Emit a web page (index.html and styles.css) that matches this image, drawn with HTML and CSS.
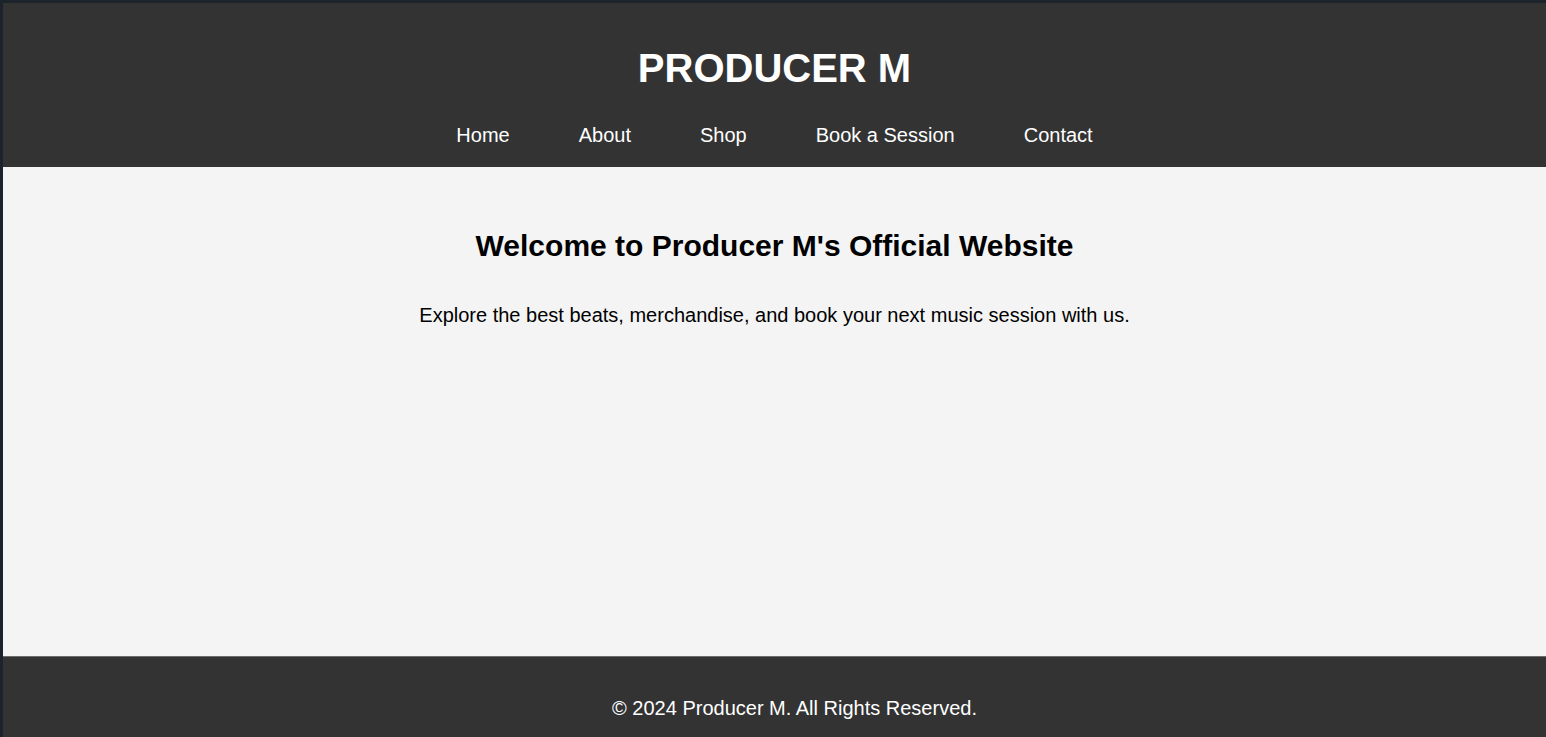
FILE: index.html
```html
<!DOCTYPE html>
<html lang="en">
<head>
<meta charset="utf-8">
<title>Producer M</title>
<link rel="stylesheet" href="styles.css">
</head>
<body>
<div class="frame">
  <header class="site-header">
    <h1 class="brand">PRODUCER M</h1>
    <nav class="nav">
      <a href="#" class="nav-link">Home</a>
      <a href="#" class="nav-link">About</a>
      <a href="#" class="nav-link">Shop</a>
      <a href="#" class="nav-link">Book a Session</a>
      <a href="#" class="nav-link">Contact</a>
    </nav>
  </header>
  <main class="hero">
    <h2 class="hero-title">Welcome to Producer M's Official Website</h2>
    <p class="hero-text">Explore the best beats, merchandise, and book your next music session with us.</p>
  </main>
  <footer class="site-footer">
    <p class="footer-text">&copy; 2024 Producer M. All Rights Reserved.</p>
  </footer>
</div>
</body>
</html>
```

FILE: styles.css
```css
html, body {
  margin: 0;
  padding: 0;
  height: 100%;
  overflow: hidden;
}

body {
  font-family: "Liberation Sans", Arial, sans-serif;
  font-size: 20px;
  line-height: 23px;
  background: #333333;
}

.frame {
  border-top: 3px solid #1c232b;
  border-left: 3px solid #1c232b;
  min-height: 100%;
  box-sizing: border-box;
}

.site-header {
  background: #333333;
  color: #ffffff;
  padding: 42px 0 20px;
  text-align: center;
}

.brand {
  margin: 0;
  font-size: 40px;
  line-height: 46px;
  font-weight: bold;
}

.nav {
  margin-top: 33px;
  display: flex;
  justify-content: center;
  gap: 69px;
}

.nav-link {
  color: #ffffff;
  text-decoration: none;
  font-size: 20px;
  line-height: 23px;
}

.hero {
  background: #f4f4f4;
  height: 489px;
  box-sizing: border-box;
  padding-top: 61px;
  text-align: center;
  color: #000000;
}

.hero-title {
  margin: 0;
  font-size: 30px;
  line-height: 35px;
  font-weight: bold;
}

.hero-text {
  margin: 41px 0 0;
  font-size: 20px;
  line-height: 23px;
}

.site-footer {
  background: #333333;
  border-top: 1px solid #6b6b6b;
  color: #ffffff;
  text-align: center;
  padding: 40px 0 17px 40px;
}

.footer-text {
  margin: 0;
  font-size: 20px;
  line-height: 23px;
}
```
